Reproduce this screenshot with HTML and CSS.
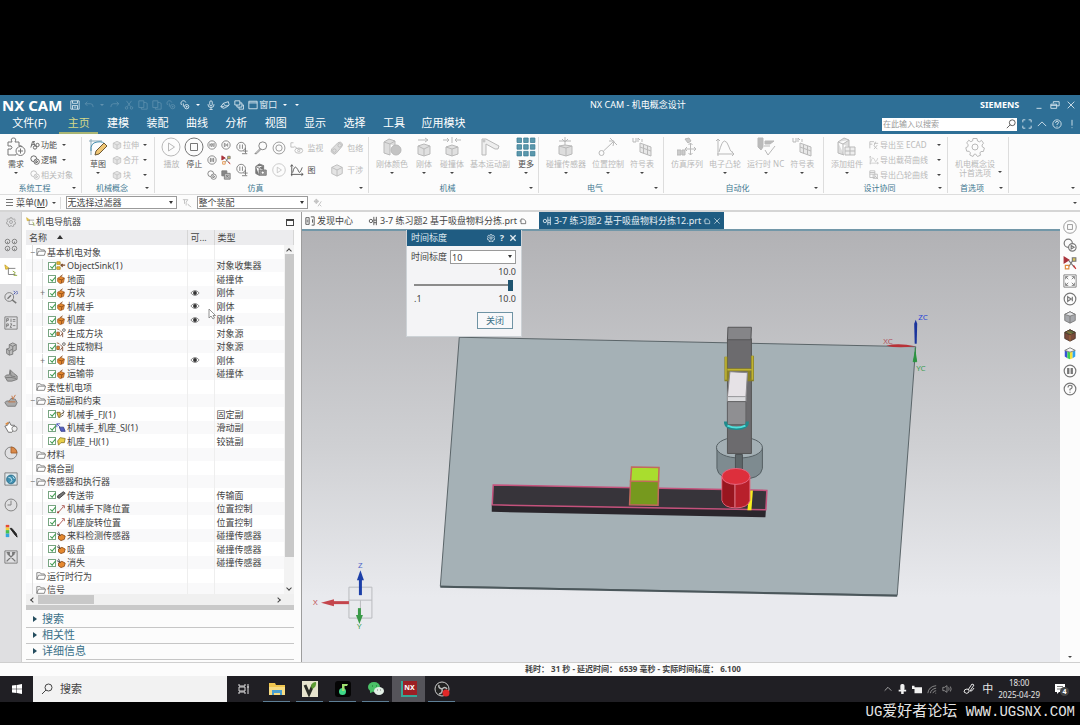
FILE: index.html
```html
<!DOCTYPE html>
<html lang="zh-CN">
<head>
<meta charset="utf-8">
<title>NX CAM - 机电概念设计</title>
<link rel="stylesheet" href="styles.css">
</head>
<body>
<svg class="defs" aria-hidden="true">
  <symbol id="save" viewBox="0 0 12 12"><path d="M1 1h10v10H1zM3 1v3h6V1M3 11V6.500h6V11M4.500 8.500h3"/></symbol>
  <symbol id="undo" viewBox="0 0 12 12"><path d="M4 2 1.500 4.500 4 7M1.500 4.500H8q3 0 3 4"/></symbol>
  <symbol id="redo" viewBox="0 0 12 12"><path d="M8 2l2.500 2.500L8 7M10.500 4.500H4q-3 0-3 4"/></symbol>
  <symbol id="cut" viewBox="0 0 12 12"><path d="M3 1l5 7M9 1L4 8"/><circle cx="3" cy="9.500" r="1.500"/><circle cx="9" cy="9.500" r="1.500"/></symbol>
  <symbol id="func" viewBox="0 0 12 12"><path d="M1 9L3 2l3 0M4 2l2 5M2 6l3-1"/><circle cx="6" cy="9" r="2"/><circle cx="9" cy="6" r="2"/></symbol>
  <symbol id="copy" viewBox="0 0 12 12"><path d="M1 1h6v8H1zM4 9v2h7V4L9 3H7"/></symbol>
  <symbol id="touch" viewBox="0 0 12 12"><path d="M2 6a3 3 0 1 1 5-3M4 4v4"/><circle cx="8" cy="8" r="2.600"/><path d="M8 7v2M7 8h2"/></symbol>
  <symbol id="mic" viewBox="0 0 12 12"><rect x="4.500" y="1" width="3" height="6" rx="1.500"/><path d="M2.500 5v1q0 3 3.500 3t3.500-3V5M6 9v2.500M4 11.500h4"/></symbol>
  <symbol id="loopback" viewBox="0 0 12 12"><path d="M1 8l3-4 6-2 1 4-4 3-3 1zM4 4l2 3h4M1 8h4"/></symbol>
  <symbol id="cascade" viewBox="0 0 12 12"><path d="M1 1h6v5H1zM3.500 6v2.500H9.500V3.500H7M6 8.500V11h5.500V6h-2"/></symbol>
  <symbol id="window" viewBox="0 0 12 12"><path d="M1 1.500h10v9H1zM1 3.500h10"/></symbol>
  <symbol id="restore" viewBox="0 0 12 12"><path d="M4 4V2h7v5H8M1 5h7v5H1zM1 6.500h7"/></symbol>
  <symbol id="close" viewBox="0 0 12 12"><path d="M2 2l8 8M10 2l-8 8"/></symbol>
  <symbol id="min" viewBox="0 0 12 12"><path d="M3 10h6"/></symbol>
  <symbol id="find" viewBox="0 0 12 12"><circle cx="7.500" cy="4.500" r="3.500"/><path d="M5 7l-4 4"/></symbol>
  <symbol id="full" viewBox="0 0 12 12"><path d="M1 4V1h3M8 1h3v3M11 8v3H8M4 11H1V8"/></symbol>
  <symbol id="up" viewBox="0 0 12 12"><path d="M1 8.500l5-5 5 5"/></symbol>
  <symbol id="help" viewBox="0 0 12 12"><circle cx="6" cy="6" r="5"/><path d="M4.300 4.800q0-2 1.800-2t1.700 1.700Q7.800 5.500 6 6.200v1M6 8.300v1"/></symbol>
  <symbol id="bar" viewBox="0 0 12 12"><path d="M6 1v7M6 10v1"/></symbol>

  <symbol id="puzzle" viewBox="0 0 20 20"><path d="M2 5h4q-2-4 1.500-4T9 5h4v4q3-1 3 1M2 5v4q4-1 4 1.500T2 12v6h8M10 18v-1"/><circle cx="14.500" cy="14" r="4.500"/><path d="M14.500 11.500v5M12 14h5"/></symbol>
  <symbol id="sketch" viewBox="0 0 20 20"><path d="M3 2v16M1 4h13" stroke="#8aa9b8"/><path d="M3 14Q2 6 9 5t8 3" stroke="#4a90b0"/><path d="M7 18l1-4 8-8 3 3-8 8z" fill="#f0c674" stroke="#6b5836"/></symbol>
  <symbol id="play" viewBox="0 0 20 20"><circle cx="10" cy="10" r="9"/><path d="M7.500 6l6 4-6 4z"/></symbol>
  <symbol id="stop" viewBox="0 0 20 20"><circle cx="10" cy="10" r="9"/><path d="M6.500 6.500h7v7h-7z"/></symbol>
  <symbol id="ring2" viewBox="0 0 20 20"><circle cx="10" cy="10" r="8.500"/><circle cx="10" cy="10" r="4.500"/></symbol>
  <symbol id="rew" viewBox="0 0 12 12"><circle cx="6" cy="6" r="5"/><path d="M3.500 4v4M6 4L4 6l2 2zM8.500 4l-2 2 2 2z"/></symbol>
  <symbol id="fwd" viewBox="0 0 12 12"><circle cx="6" cy="6" r="5"/><path d="M4 4l3 2-3 2zM8 4v4"/></symbol>
  <symbol id="pause" viewBox="0 0 12 12"><circle cx="6" cy="6" r="5"/><path d="M4 4h1v4H4zM7 4h1v4H7z"/></symbol>
  <symbol id="redx" viewBox="0 0 12 12"><path d="M1 1v5l4-2.500z" fill="#a8323a" stroke="#a8323a"/><path d="M5 4l5 6M9 3L5 9" stroke="#777"/><path d="M8 1.500h3v3H8z" fill="#d8c35a" stroke="#777"/><path d="M2 8h3v3H2z" fill="#fff" stroke="#e08a3c"/><path d="M9 8l2 3" stroke="#c33"/></symbol>
  <symbol id="clock2" viewBox="0 0 12 12"><circle cx="4.500" cy="4.500" r="3.500"/><circle cx="8" cy="8" r="3.200" fill="#fff"/><path d="M7 6.500l2.500 1.500L7 9.500z"/></symbol>
  <symbol id="stack" viewBox="0 0 12 12"><path d="M1 1h6v6H1z" fill="#888"/><path d="M4 4h7v7H4z" fill="#bbb"/><path d="M6 6l3 3M9 6L6 9"/></symbol>
  <symbol id="sheet" viewBox="0 0 12 12"><path d="M1 1h6v8H1zM1 3h6M1 5h4M5 5h5v5H5zM7 7l4 4"/></symbol>
  <symbol id="pausedrop" viewBox="0 0 16 16"><circle cx="7" cy="6.500" r="5"/><path d="M5.500 4v5M8.500 4v5M12 8v6M9.500 11.500h5M8 14.500h6"/></symbol>
  <symbol id="mag" viewBox="0 0 16 16"><circle cx="10" cy="5.500" r="4.500"/><path d="M7 8.500l-6 6 2 0 5-5"/></symbol>
  <symbol id="cubecam" viewBox="0 0 16 16"><path d="M2 4l4-3 5 2v5M2 4v8l4 2M2 4l4 2 5-3M6 6v8" fill="#777"/><path d="M6 8h8v6H6z" fill="#999"/><circle cx="10" cy="11" r="1.800" fill="#fff"/></symbol>
  <symbol id="watch" viewBox="0 0 16 16"><path d="M1 2v5h4M1 2l3 0M5 6l4 3 5 0"/><ellipse cx="10" cy="11" rx="4.500" ry="3"/><circle cx="10" cy="11" r="1.300"/></symbol>
  <symbol id="graph" viewBox="0 0 16 16"><path d="M2 15V2M.5 4L2 2l1.500 2M1 13h14M13 11.500l2 1.500-2 1.500M3 11q2-8 4-6t3 5 4-5"/></symbol>
  <symbol id="cam" viewBox="0 0 20 20"><path d="M3 19V2M1 4l2-2 2 2M2 17h17M17 15l2 2-2 2M4 15q3-11 5.500-11T14 10t4 5"/></symbol>
  <symbol id="capsule" viewBox="0 0 16 16"><path d="M3 14q-3-2-1-5l7-7q3-2 5 1 1 2-1 4l-6 7q-2 2-4 0z" fill="#ddd"/><circle cx="5" cy="11" r="2"/><circle cx="11" cy="5" r="2"/></symbol>
  <symbol id="cube" viewBox="0 0 16 16"><path d="M2 5l6-3 6 3v7l-6 3-6-3z" fill="#e4e4e4"/><path d="M2 5l6 3 6-3M8 8v7"/></symbol>
  <symbol id="cubes" viewBox="0 0 20 20"><path d="M2 5l5-3 6 2v5M2 5v11l6 2V7zM8 7l5-3" fill="#ddd"/><circle cx="14" cy="13" r="5" fill="#c4c4c4"/></symbol>
  <symbol id="cubearrow" viewBox="0 0 20 20"><path d="M4 3h9M11 1l3 2-3 2"/><path d="M4 9l6-2 6 2v8l-6 2-6-2z" fill="#e0e0e0"/><path d="M4 9l6 3 6-3M10 12v7"/></symbol>
  <symbol id="cubehit" viewBox="0 0 20 20"><path d="M1 3h6M5 1l2 2-2 2M19 3h-6M15 1l-2 2 2 2M10 0v6"/><path d="M4 10l6-2 6 2v7l-6 2-6-2z" fill="#e0e0e0"/><path d="M4 10l6 2 6-2M10 12v7"/></symbol>
  <symbol id="joint" viewBox="0 0 20 20"><path d="M2 2h4l13 7-1 3h-3L6 7v11H2z" fill="#eee"/><circle cx="4" cy="4" r="1"/></symbol>
  <symbol id="grid9" viewBox="0 0 20 20"><g fill="#5b98ac" stroke="#3d7f98" stroke-width=".8"><path d="M1 1h4.500v4.500H1zM7.700 1h4.500v4.500H7.700zM14.400 1h4.500v4.500h-4.500zM1 7.700h4.500v4.500H1zM7.700 7.700h4.500v4.500H7.700zM14.400 7.700h4.500v4.500h-4.500zM1 14.400h4.500v4.500H1zM7.700 14.400h4.500v4.500H7.700zM14.400 14.400h4.500v4.500h-4.500z"/></g></symbol>
  <symbol id="sensor" viewBox="0 0 20 20"><path d="M9 0v8M3 4h12M6 2l3 3 3-3"/><path d="M3 9l6-1 7 1v8l-6 2-7-2z" fill="#ddd"/><path d="M3 9l7 2 6-2M10 11v8"/></symbol>
  <symbol id="pos" viewBox="0 0 20 20"><circle cx="3.500" cy="16" r="2.500"/><path d="M5.500 14L15 5M11 4l5 0-1 5M12 1l7 7"/></symbol>
  <symbol id="symtab" viewBox="0 0 20 20"><path d="M1 1v4h3V1M6 5V1l2 2M10 2v3"/><path d="M8 6l11 4v9L8 15zM11.500 7.500v9M15.500 9v9M8 10l11 4" fill="#e8e8e8"/></symbol>
  <symbol id="seq" viewBox="0 0 20 20"><path d="M0 13h4v5H0zM5 13h3v5H5zM8 2l4-1 2 3-3 2z" fill="#ccc"/><path d="M13.500 6v12M8 12h11M11.500 8l2-2 2 2M11.500 16l2 2 2-2M10 10l-2 2 2 2M17 10l2 2-2 2"/></symbol>
  <symbol id="nc" viewBox="0 0 20 20"><path d="M2 1h5v9l-2 3-3-3zM9 4h9l-4 3H9z" fill="#bbb"/><path d="M9 13l3 5 7-9M8 9h6"/></symbol>
  <symbol id="addcomp" viewBox="0 0 20 20"><path d="M1 5l6-4 5 2v7M1 5v11l6 2M1 5l5 2 6-4M6 7v11" fill="#ddd"/><path d="M8 10h10v8H8zM13 10v8M8 14h10" fill="#eee"/></symbol>
  <symbol id="gear" viewBox="0 0 20 20"><path d="M8 1.500h4l.5 2.500 2 .8 2-1.400 2 2.800-1.500 1.900.4 1.900 2 1-1 3.500-2.500 0-1 1.500.6 2.200-3 1.300L10.500 17h-1L8 19.500l-3.200-1.500.6-2.200-1.200-1.500-2.500-.1-.9-3.500 2-1 .4-1.900L1.700 5.900l2.100-2.700 2 1.500 1.800-.8z"/><circle cx="10" cy="10" r="3"/></symbol>
  <symbol id="export" viewBox="0 0 12 12"><path d="M1 2h5M1 5h3M1 2v8M6 4h5M8 2l-2 5 4 4M6 11l4-5"/></symbol>
  <symbol id="filter" viewBox="0 0 12 12"><path d="M1 2h6L5 5v4M3 2v5M7 7l2 3M9 9l2 2"/></symbol>
  <symbol id="snap" viewBox="0 0 12 12"><circle cx="4" cy="4" r="2"/><path d="M4 1v6M1 4h6M10 4L6 10M8 8l2 2"/></symbol>

  <symbol id="nav" viewBox="0 0 16 16"><path d="M1 1l5 4-4 1z" fill="#f3d34a" stroke="#c9a32e"/><path d="M5 5h8M5 5v7h8" stroke="#777"/><path d="M10 8l3 2-2 1M11 13h4" stroke="#8aa62e"/></symbol>
  <symbol id="four" viewBox="0 0 16 16"><circle cx="4" cy="4" r="2.600"/><circle cx="12" cy="4" r="2.600"/><circle cx="4" cy="12" r="2.600"/><circle cx="12" cy="12" r="2.600"/><path d="M4 4v2M12 4v2M4 12v2M12 12v2"/></symbol>
  <symbol id="compass" viewBox="0 0 16 16"><circle cx="6" cy="8" r="5"/><path d="M9 11l5 4M4 10l4-4" stroke-width="1.600"/><path d="M11 1l2 2-2 2M14 1l2 2-2 2" stroke="#3546a8"/></symbol>
  <symbol id="p1p2" viewBox="0 0 16 16"><path d="M1 1h14v14H1z"/><path d="M3 7V3h2v2H3M8 3v4M10 4h3M10 6h3M3 13V9h2v2H3M7 9h2l-2 4h2M10 11h3"/></symbol>
  <symbol id="part" viewBox="0 0 16 16"><path d="M3 8l3-1V3l4-2 4 2v6l-4 2v3l-4 1-3-2z" fill="#bbb"/><path d="M3 8l3 2 4-2V5l4-2M6 10v5M10 8v3M6 3l4 2"/></symbol>
  <symbol id="part2" viewBox="0 0 16 16"><path d="M1 10q1-3 5-2L7 2l4 4 4 3v4l-6 2H4z" fill="#aaa"/><path d="M2 11q6-1 12 1M7 3l1 6 5 1"/></symbol>
  <symbol id="part3" viewBox="0 0 16 16"><path d="M1 10q1-3 5-2l2-3 5 1 2 4-2 4H4z" fill="#aaa"/><path d="M5 9h8M9 2l1 4 3-5" stroke="#c46f3a"/></symbol>
  <symbol id="orangehand" viewBox="0 0 16 16"><path d="M1 7l3-1 2-4 2 4 4 0v5l-3 3H5z" fill="#fff" stroke="#666"/><circle cx="12" cy="10" r="3" fill="#eee"/><path d="M2 5l3-2" stroke="#e08a3c" stroke-width="2"/></symbol>
  <symbol id="pie" viewBox="0 0 16 16"><circle cx="8" cy="8" r="6.800"/><path d="M8 8V1.200A6.800 6.800 0 0 1 14.800 8z" fill="#d98a4a" stroke="#a55f2a"/></symbol>
  <symbol id="globe" viewBox="0 0 16 16"><path d="M1 1h14v14H1z" fill="#dfe8ec"/><circle cx="8" cy="8.500" r="5" fill="#3f8fb0" stroke="#2b6a86"/><path d="M5 6l3 1 1 3-2 2M10 5l2 3" stroke="#d7eef5"/></symbol>
  <symbol id="clock" viewBox="0 0 16 16"><circle cx="8" cy="8" r="6.800"/><path d="M8 3v5H4"/></symbol>
  <symbol id="palette" viewBox="0 0 16 16"><path d="M2 1h4v3H2z" fill="#e64b35" stroke="none"/><path d="M2 4h4v3H2z" fill="#f3d13b" stroke="none"/><path d="M2 7h4v4H2z" fill="#49c04d" stroke="none"/><path d="M2 11h4v4H2z" fill="#33a5e0" stroke="none"/><path d="M7 5l6 8 2 2-1-4-5-6z" fill="#222" stroke="#222"/></symbol>
  <symbol id="tools" viewBox="0 0 16 16"><path d="M1 1h14v14H1z"/><path d="M4 4l9 9M12 4l-9 9M3 3l3 0 0 3M13 3l-3 0 0 3" stroke-width="1.500"/></symbol>
  <symbol id="fit" viewBox="0 0 16 16"><path d="M1 1h14v14H1z"/><path d="M3 6V3h3M10 3h3v3M13 10v3h-3M6 13H3v-3M3 3l3 3M13 3l-3 3M13 13l-3-3M3 13l3-3"/></symbol>
  <symbol id="shade" viewBox="0 0 16 16"><path d="M2 5l6-3 6 3v7l-6 3-6-3z" fill="#a6a8ac"/><path d="M2 5l6-3 6 3-6 2z" fill="#e4e5e7"/><path d="M8 7v8"/></symbol>
  <symbol id="shadebrown" viewBox="0 0 16 16"><path d="M2 5l6-3 6 3v7l-6 3-6-3z" fill="#7a4a3a" stroke="#4a352c"/><path d="M2 5l6-3 6 3-6 3z" fill="#5f6b3c" stroke="#4a352c"/><path d="M8 8v7M5 4l5 3" stroke="#a9713f"/></symbol>
  <symbol id="rainbow" viewBox="0 0 16 16"><path d="M2 5l3 1v8l-3-2z" fill="#3753d6" stroke="none"/><path d="M5 6l3 1v8l-3-1z" fill="#3ecf52" stroke="none"/><path d="M8 7l3-1v8l-3 1z" fill="#f5e13a" stroke="none"/><path d="M11 6l3-1v7l-3 2z" fill="#2fa4ee" stroke="none"/><path d="M2 5l6-3 6 3-6 2z" fill="#f4f4f4"/></symbol>

  <symbol id="folder" viewBox="0 0 12 12"><path d="M1 10V2h4l1 1.500h4V5M1 10l2-5h8.500L10 10z" fill="#fff" stroke="#777"/></symbol>
  <symbol id="body" viewBox="0 0 12 12"><path d="M2 5l4-2 4 2-1 5-4 1.500L2 9z" fill="#e5882e" stroke="#a8622a"/><path d="M3 6l4 1 3-2M7 7l-.500 4M5 3l3-2" stroke="#8a4b18"/></symbol>
  <symbol id="sink" viewBox="0 0 12 12"><path d="M1 1h4v3H1zM1 7h4v3H1z" fill="#f2c230" stroke="#a88a2a"/><path d="M6 5h5M8 3.500L6 5l2 2" stroke="#7b4a2a" stroke-width="1.500"/></symbol>
  <symbol id="source" viewBox="0 0 12 12"><path d="M1 1l3 1M1 5h3v4H1z" fill="#e5882e" stroke="#935c2a"/><circle cx="9.500" cy="2.500" r="1.600" stroke="#555"/><path d="M5 3l3 3-3 4M8 6v5" stroke="#7c4a34"/></symbol>
  <symbol id="fj" viewBox="0 0 12 12"><path d="M1 4h4v6H3zM5 7l4-3" fill="#efc64b" stroke="#77602a"/><path d="M8 1q3 2 0 5M6 9l3-2" stroke="#444"/></symbol>
  <symbol id="sj" viewBox="0 0 12 12"><path d="M1 1l4 4M1 5V1h4" stroke="#3b49b5"/><path d="M4 5h5l2 5H6z" fill="#5560c4" stroke="#333c86"/></symbol>
  <symbol id="hj" viewBox="0 0 12 12"><path d="M2 6l3-4 6 1-1 5-4 0-3 3z" fill="#e8cf4c" stroke="#8f7a24"/></symbol>
  <symbol id="belt" viewBox="0 0 12 12"><path d="M2 7l7-5 2 2-7 6q-3 0-2-3z" fill="#777" stroke="#333"/></symbol>
  <symbol id="ctl" viewBox="0 0 12 12"><path d="M3 10l6-7M7 2l3 0v3" stroke="#a2453d"/><circle cx="2.500" cy="10" r="1.300" fill="#a2453d" stroke="none"/></symbol>
  <symbol id="csen" viewBox="0 0 12 12"><path d="M3 6l4-2 4 2-1 4-4 1.500-3-2z" fill="#e5882e" stroke="#8a4b18"/><path d="M3 1l2 5M1 3l3 2" stroke="#333"/></symbol>
  <symbol id="eye" viewBox="0 0 12 12"><path d="M1 6q5-6 10 0-5 6-10 0z" stroke="#777"/><circle cx="6" cy="6" r="2.300" fill="#333" stroke="none"/></symbol>
  <symbol id="pin" viewBox="0 0 12 12"><path d="M3 10V3h4l3 3v4zM1 6h2"/></symbol>
  <symbol id="doc" viewBox="0 0 12 12"><path d="M7 1v10M10 1v10"/><circle cx="3.500" cy="6" r="2"/><path d="M7 5h3M7 8h3"/></symbol>
  <symbol id="discover" viewBox="0 0 12 12"><path d="M1 2h4v8H1zM2 5h2M2 7h2M7 1h4v10H8M9 4v4"/></symbol>
</svg>

<div class="app">
  <header class="titlebar">
    <div class="quick">
      <h1 class="brand">NX CAM</h1>
      <button class="qb" aria-label="保存"><svg class="i10"><use href="#save"/></svg></button>
      <button class="qb off" aria-label="撤销"><svg class="i10"><use href="#undo"/></svg></button>
      <span class="dot off"></span>
      <button class="qb off" aria-label="重做"><svg class="i10"><use href="#redo"/></svg></button>
      <button class="qb off" aria-label="剪切"><svg class="i10"><use href="#cut"/></svg></button>
      <button class="qb off" aria-label="复制"><svg class="i10"><use href="#copy"/></svg></button>
      <button class="qb off" aria-label="粘贴"><svg class="i10"><use href="#copy"/></svg></button>
      <button class="qb off" aria-label="重复命令"><svg class="i10"><use href="#touch"/></svg></button>
      <button class="qb" aria-label="触控"><svg class="i10"><use href="#touch"/></svg></button>
      <span class="dot"></span>
      <button class="qb" aria-label="语音"><svg class="i10"><use href="#mic"/></svg></button>
      <button class="qb" aria-label="助手"><svg class="i10"><use href="#loopback"/></svg></button>
      <button class="qb" aria-label="层叠"><svg class="i10"><use href="#cascade"/></svg></button>
      <button class="qb win"><svg class="i10"><use href="#window"/></svg>窗口</button>
      <span class="dot"></span>
      <span class="dot"></span>
    </div>
    <div class="apptitle">NX CAM - 机电概念设计</div>
    <div class="winctl">
      <strong class="vendor">SIEMENS</strong>
      <button class="qb" aria-label="最小化"><svg class="i10"><use href="#min"/></svg></button>
      <button class="qb" aria-label="还原"><svg class="i10"><use href="#restore"/></svg></button>
      <button class="qb" aria-label="关闭窗口"><svg class="i10"><use href="#close"/></svg></button>
    </div>
  </header>

  <nav class="tabs">
    <a href="#file">文件(F)</a>
    <a href="#home" class="on">主页</a>
    <a href="#model">建模</a>
    <a href="#asm">装配</a>
    <a href="#curve">曲线</a>
    <a href="#analysis">分析</a>
    <a href="#view">视图</a>
    <a href="#display">显示</a>
    <a href="#select">选择</a>
    <a href="#tool">工具</a>
    <a href="#apps">应用模块</a>
    <div class="tabtools">
      <label class="search"><input type="text" placeholder="在此输入以搜索" aria-label="搜索命令"><svg class="i10"><use href="#find"/></svg></label>
      <button class="qb" aria-label="全屏"><svg class="i10"><use href="#full"/></svg></button>
      <button class="qb" aria-label="折叠功能区"><svg class="i10"><use href="#up"/></svg></button>
      <button class="qb" aria-label="帮助"><svg class="i10"><use href="#help"/></svg></button>
      <button class="qb" aria-label="提示"><svg class="i10"><use href="#bar"/></svg></button>
    </div>
  </nav>

  <section class="ribbon">
    <div class="group">
      <div class="cmds split">
        <button class="big"><svg class="i20"><use href="#puzzle"/></svg><span>需求</span><i class="dn"></i></button>
        <div class="list">
          <button class="sm"><svg class="i10"><use href="#func"/></svg>功能<i class="dn"></i></button>
          <button class="sm"><svg class="i10"><use href="#clock2"/></svg>逻辑<i class="dn"></i></button>
          <button class="sm" disabled><svg class="i10"><use href="#clock2"/></svg>相关对象</button>
        </div>
      </div>
      <div class="cap">系统工程<i class="dn"></i></div>
    </div>
    <div class="group">
      <div class="cmds split">
        <button class="big"><svg class="i20"><use href="#sketch"/></svg><span>草图</span><i class="dn"></i></button>
        <div class="list">
          <button class="sm wide" disabled><svg class="i10"><use href="#cube"/></svg>拉伸<i class="dn"></i></button>
          <button class="sm wide" disabled><svg class="i10"><use href="#cube"/></svg>合开<i class="dn"></i></button>
          <button class="sm wide" disabled><svg class="i10"><use href="#cube"/></svg>块<i class="dn"></i></button>
        </div>
      </div>
      <div class="cap">机械概念<i class="dn"></i></div>
    </div>
    <div class="group">
      <div class="cmds sim">
        <button class="big" disabled><svg class="i20"><use href="#play"/></svg><span>播放</span></button>
        <button class="big"><svg class="i20"><use href="#stop"/></svg><span>停止</span></button>
        <div class="minis">
          <button class="ic" aria-label="重新开始"><svg class="i10"><use href="#rew"/></svg></button>
          <button class="ic" aria-label="步进"><svg class="i10"><use href="#fwd"/></svg></button>
          <button class="ic" aria-label="暂停"><svg class="i10"><use href="#pause"/></svg></button>
          <button class="ic" aria-label="碰撞"><svg class="i10"><use href="#redx"/></svg></button>
          <button class="ic" aria-label="时间标度"><svg class="i10"><use href="#clock2"/></svg></button>
          <button class="ic" aria-label="快照"><svg class="i10"><use href="#stack"/></svg></button>
        </div>
        <div class="mids">
          <button class="ic" aria-label="断点"><svg class="i14"><use href="#pausedrop"/></svg></button>
          <button class="ic" aria-label="探测"><svg class="i14"><use href="#mag"/></svg></button>
          <button class="ic" aria-label="录制"><svg class="i14"><use href="#ring2"/></svg></button>
          <button class="ic" aria-label="断点设置"><svg class="i14"><use href="#pausedrop"/></svg></button>
          <button class="ic" aria-label="截图"><svg class="i14"><use href="#cubecam"/></svg></button>
          <button class="ic" disabled aria-label="回放"><svg class="i14"><use href="#play"/></svg></button>
        </div>
        <div class="pair">
          <button class="sm" disabled><svg class="i14"><use href="#watch"/></svg>监视</button>
          <button class="sm"><svg class="i14"><use href="#graph"/></svg>图</button>
        </div>
        <div class="pair">
          <button class="sm" disabled><svg class="i14"><use href="#capsule"/></svg>包络</button>
          <button class="sm" disabled><svg class="i14"><use href="#cube"/></svg>干涉</button>
        </div>
      </div>
      <div class="cap">仿真<i class="dn"></i></div>
    </div>
    <div class="group">
      <div class="cmds row">
        <button class="big" disabled><svg class="i20"><use href="#cubes"/></svg><span>刚体颜色</span><i class="dn"></i></button>
        <button class="big" disabled><svg class="i20"><use href="#cubearrow"/></svg><span>刚体</span><i class="dn"></i></button>
        <button class="big" disabled><svg class="i20"><use href="#cubehit"/></svg><span>碰撞体</span><i class="dn"></i></button>
        <button class="big" disabled><svg class="i20"><use href="#joint"/></svg><span>基本运动副</span><i class="dn"></i></button>
        <button class="big"><svg class="i20"><use href="#grid9"/></svg><span>更多</span><i class="dn"></i></button>
      </div>
      <div class="cap">机械<i class="dn"></i></div>
    </div>
    <div class="group">
      <div class="cmds row">
        <button class="big" disabled><svg class="i20"><use href="#sensor"/></svg><span>碰撞传感器</span><i class="dn"></i></button>
        <button class="big" disabled><svg class="i20"><use href="#pos"/></svg><span>位置控制</span><i class="dn"></i></button>
        <button class="big" disabled><svg class="i20"><use href="#symtab"/></svg><span>符号表</span><i class="dn"></i></button>
      </div>
      <div class="cap">电气<i class="dn"></i></div>
    </div>
    <div class="group">
      <div class="cmds row">
        <button class="big" disabled><svg class="i20"><use href="#seq"/></svg><span>仿真序列</span></button>
        <button class="big" disabled><svg class="i20"><use href="#cam"/></svg><span>电子凸轮</span><i class="dn"></i></button>
        <button class="big" disabled><svg class="i20"><use href="#nc"/></svg><span>运行时 NC</span><i class="dn"></i></button>
        <button class="big" disabled><svg class="i20"><use href="#symtab"/></svg><span>符号表</span><i class="dn"></i></button>
      </div>
      <div class="cap">自动化<i class="dn"></i></div>
    </div>
    <div class="group">
      <div class="cmds row">
        <button class="big" disabled><svg class="i20"><use href="#addcomp"/></svg><span>添加组件</span><i class="dn"></i></button>
        <div class="list">
          <button class="sm ex" disabled><svg class="i10"><use href="#export"/></svg>导出至 ECAD<i class="dn"></i></button>
          <button class="sm ex" disabled><svg class="i10"><use href="#graph"/></svg>导出载荷曲线<i class="dn"></i></button>
          <button class="sm ex" disabled><svg class="i10"><use href="#sheet"/></svg>导出凸轮曲线<i class="dn"></i></button>
        </div>
      </div>
      <div class="cap">设计协同<i class="dn"></i></div>
    </div>
    <div class="group">
      <div class="cmds row pref">
        <button class="big" disabled><svg class="i20"><use href="#gear"/></svg><span>机电概念设<br>计首选项</span></button>
        <i class="dn"></i>
      </div>
      <div class="cap">首选项<i class="dn"></i></div>
    </div>
    <div class="group">
      <div class="cmds"></div>
      <div class="cap"><i class="dn"></i></div>
    </div>
  </section>

  <section class="selbar">
    <button class="menu"><span class="burger"></span>菜单(<u>M</u>)<i class="dn"></i></button>
    <label class="pick"><select aria-label="选择过滤器"><option>无选择过滤器</option></select></label>
    <svg class="i10 faint"><use href="#filter"/></svg>
    <label class="pick"><select aria-label="选择范围"><option>整个装配</option></select></label>
    <svg class="i10 faint"><use href="#snap"/></svg>
    <i class="dn last"></i>
  </section>

  <main class="work">
    <aside class="rail">
      <button class="first" aria-label="设置"><svg class="i10"><use href="#gear"/></svg></button>
      <button aria-label="装配导航器"><svg class="i14"><use href="#four"/></svg></button>
      <button class="on" aria-label="机电导航器"><svg class="i14"><use href="#nav"/></svg></button>
      <button aria-label="运行时察看器"><svg class="i14"><use href="#compass"/></svg></button>
      <button aria-label="表达式"><svg class="i14"><use href="#p1p2"/></svg></button>
      <button aria-label="部件导航器"><svg class="i14"><use href="#part"/></svg></button>
      <button aria-label="重用库"><svg class="i14"><use href="#part2"/></svg></button>
      <button aria-label="加工向导"><svg class="i14"><use href="#part3"/></svg></button>
      <button aria-label="视图管理"><svg class="i14"><use href="#orangehand"/></svg></button>
      <button aria-label="分析"><svg class="i14"><use href="#pie"/></svg></button>
      <button aria-label="浏览器"><svg class="i14"><use href="#globe"/></svg></button>
      <button aria-label="历史记录"><svg class="i14"><use href="#clock"/></svg></button>
      <button aria-label="颜色"><svg class="i14"><use href="#palette"/></svg></button>
      <button aria-label="工具"><svg class="i14"><use href="#tools"/></svg></button>
    </aside>

    <section class="panel">
      <h2 class="ptitle"><svg class="i10"><use href="#nav"/></svg>机电导航器<span class="box"></span></h2>
      <div class="treebox">
        <div class="treeview">
          <table class="tree">
            <thead><tr><th class="c1">名称 <i class="upt"></i></th><th class="c2">可...</th><th class="c3">类型</th></tr></thead>
            <tbody>
              <tr><td><div class="cat"><b>−</b><svg class="i10"><use href="#folder"/></svg>基本机电对象</div></td><td></td><td></td></tr>
              <tr><td><label class="leaf"><b></b><input type="checkbox" checked><svg class="i10"><use href="#sink"/></svg>ObjectSink(1)</label></td><td></td><td>对象收集器</td></tr>
              <tr><td><label class="leaf"><b></b><input type="checkbox" checked><svg class="i10"><use href="#body"/></svg>地面</label></td><td></td><td>碰撞体</td></tr>
              <tr><td><label class="leaf"><b>+</b><input type="checkbox" checked><svg class="i10"><use href="#body"/></svg>方块</label></td><td><svg class="i10"><use href="#eye"/></svg></td><td>刚体</td></tr>
              <tr><td><label class="leaf"><b></b><input type="checkbox" checked><svg class="i10"><use href="#body"/></svg>机械手</label></td><td><svg class="i10"><use href="#eye"/></svg></td><td>刚体</td></tr>
              <tr><td><label class="leaf"><b></b><input type="checkbox" checked><svg class="i10"><use href="#body"/></svg>机座</label></td><td><svg class="i10"><use href="#eye"/></svg></td><td>刚体</td></tr>
              <tr><td><label class="leaf"><b></b><input type="checkbox" checked><svg class="i10"><use href="#source"/></svg>生成方块</label></td><td></td><td>对象源</td></tr>
              <tr><td><label class="leaf"><b></b><input type="checkbox" checked><svg class="i10"><use href="#source"/></svg>生成物料</label></td><td></td><td>对象源</td></tr>
              <tr><td><label class="leaf"><b>+</b><input type="checkbox" checked><svg class="i10"><use href="#body"/></svg>圆柱</label></td><td><svg class="i10"><use href="#eye"/></svg></td><td>刚体</td></tr>
              <tr><td><label class="leaf"><b></b><input type="checkbox" checked><svg class="i10"><use href="#body"/></svg>运输带</label></td><td></td><td>碰撞体</td></tr>
              <tr><td><div class="cat"><b></b><svg class="i10"><use href="#folder"/></svg>柔性机电项</div></td><td></td><td></td></tr>
              <tr><td><div class="cat"><b>−</b><svg class="i10"><use href="#folder"/></svg>运动副和约束</div></td><td></td><td></td></tr>
              <tr><td><label class="leaf"><b></b><input type="checkbox" checked><svg class="i10"><use href="#fj"/></svg>机械手_FJ(1)</label></td><td></td><td>固定副</td></tr>
              <tr><td><label class="leaf"><b></b><input type="checkbox" checked><svg class="i10"><use href="#sj"/></svg>机械手_机座_SJ(1)</label></td><td></td><td>滑动副</td></tr>
              <tr><td><label class="leaf"><b></b><input type="checkbox" checked><svg class="i10"><use href="#hj"/></svg>机座_HJ(1)</label></td><td></td><td>铰链副</td></tr>
              <tr><td><div class="cat"><b></b><svg class="i10"><use href="#folder"/></svg>材料</div></td><td></td><td></td></tr>
              <tr><td><div class="cat"><b></b><svg class="i10"><use href="#folder"/></svg>耦合副</div></td><td></td><td></td></tr>
              <tr><td><div class="cat"><b>−</b><svg class="i10"><use href="#folder"/></svg>传感器和执行器</div></td><td></td><td></td></tr>
              <tr><td><label class="leaf"><b></b><input type="checkbox" checked><svg class="i10"><use href="#belt"/></svg>传送带</label></td><td></td><td>传输面</td></tr>
              <tr><td><label class="leaf"><b></b><input type="checkbox" checked><svg class="i10"><use href="#ctl"/></svg>机械手下降位置</label></td><td></td><td>位置控制</td></tr>
              <tr><td><label class="leaf"><b></b><input type="checkbox" checked><svg class="i10"><use href="#ctl"/></svg>机座旋转位置</label></td><td></td><td>位置控制</td></tr>
              <tr><td><label class="leaf"><b></b><input type="checkbox" checked><svg class="i10"><use href="#csen"/></svg>来料检测传感器</label></td><td></td><td>碰撞传感器</td></tr>
              <tr><td><label class="leaf"><b></b><input type="checkbox" checked><svg class="i10"><use href="#csen"/></svg>吸盘</label></td><td></td><td>碰撞传感器</td></tr>
              <tr><td><label class="leaf"><b></b><input type="checkbox" checked><svg class="i10"><use href="#csen"/></svg>消失</label></td><td></td><td>碰撞传感器</td></tr>
              <tr><td><div class="cat"><b></b><svg class="i10"><use href="#folder"/></svg>运行时行为</div></td><td></td><td></td></tr>
              <tr><td><div class="cat"><b></b><svg class="i10"><use href="#folder"/></svg>信号</div></td><td></td><td></td></tr>
            </tbody>
          </table>
          <div class="vbar"><i class="ch u"></i><span class="thumb"></span><i class="ch d"></i></div>
        </div>
        <div class="hbar"><i class="ch l"></i><span class="thumb"></span><i class="ch r"></i></div>
      </div>
      <button class="fold">搜索</button>
      <button class="fold">相关性</button>
      <button class="fold">详细信息</button>
      <svg class="cursor" viewBox="0 0 8 12"><path d="M1 1v9l2-2 2 3 1.500-1L5 7.500h2.500z" fill="#fff" stroke="#777" stroke-width=".8"/></svg>
    </section>

    <section class="view">
      <div class="docs">
        <a href="#discover" class="doc d1"><svg class="i10"><use href="#discover"/></svg>发现中心</a>
        <a href="#prt" class="doc d2"><svg class="i10"><use href="#doc"/></svg>3-7 练习题2 基于吸盘物料分拣.prt <svg class="i8"><use href="#pin"/></svg></a>
        <a href="#prt12" class="doc on"><svg class="i10"><use href="#doc"/></svg>3-7 练习题2 基于吸盘物料分拣12.prt <svg class="i8"><use href="#pin"/></svg><svg class="i8"><use href="#close"/></svg></a>
      </div>
      <div class="canvas">
        <svg class="scene" viewBox="301 231 759 432" preserveAspectRatio="none" role="img" aria-label="三维分拣模型">
          <path d="M458.500 337.500 915.500 347 897 596 439.500 587z" fill="#a5b1b6" stroke="#5a6468"/>
          <path d="M439.500 587.500 897 596.500" stroke="#4b575b" stroke-width="2"/>
          <path d="M716.500 448v21q1 11 22.500 11t23-11v-21z" fill="#7e8b90" stroke="#555f63"/>
          <ellipse cx="739" cy="448" rx="23" ry="10.500" fill="#a3afb4" stroke="#555f63"/>
          <path d="M727 339h24v115h-24z" fill="#6c6b6e" stroke="#555"/>
          <path d="M727.500 327.500h23.500l-.500 12.500h-23.500z" fill="#858588" stroke="#555557"/>
          <path d="M735 455h7v20h-7z" fill="#5d6669" stroke="#4c5154"/>
          <path d="M725.500 357v23h3v-10h20v10h3.500v-24" fill="none" stroke="#8a8124" stroke-width="3"/>
          <path d="M725.500 357v23M727 370h24M752 356v24" stroke="#c0b433" stroke-width="1.500"/>
          <path d="M729.500 372 747 373 745.500 398 727 397z" fill="#e6e2e6" stroke="#8b898c"/>
          <path d="M727 397h18.500v5H727z" fill="#dcdcdf" stroke="#99999c"/>
          <path d="M727 402h18.500v23H727z" fill="#8f8f92" stroke="#636365"/>
          <path d="M725 422q0 7 11 7t11-7" stroke="#218a8c" stroke-width="3"/>
          <path d="M727 426q9 4 18 0" stroke="#4fe0dc" stroke-width="2"/>
          <path d="M491 505.500 765.500 510.500 765 518 491 512.500z" fill="#2a262c"/>
          <path d="M492.500 485.500 766.500 491 765.500 510.500 491.500 505.500z" fill="#37343a" stroke="#c4527c" stroke-width="1.500"/>
          <path d="M630 481.500h28l-.500 24.500-28.500-.500z" fill="#76991e" stroke="#c26a5c" stroke-width="1.500"/>
          <path d="M631 467.500 658.500 468l-.500 14-28-.500z" fill="#a9dd2e" stroke="#c26a5c" stroke-width="1.500"/>
          <path d="M749 491h3.500l-1.500 20h-4z" fill="#f6ee1e"/>
          <path d="M721.500 477v24q2 7.500 14 7.500t14-7.500v-24z" fill="#b8202b" stroke="#e4647e"/>
          <path d="M722 479q1 6 13 6v23q-12-1-13-7z" fill="#98161f"/>
          <ellipse cx="735.500" cy="477" rx="14" ry="8" fill="#dd2f3c" stroke="#e4647e"/>
          <path d="M734.500 485v23" stroke="#ee8a9c"/>
          <path d="M886 346q12-3 29 .5-17 2.500-29-.500z" fill="#b83238"/>
          <path d="M915.500 320l1.500 4-.500 20h-2l-.500-20z" fill="#1a349c"/>
          <path d="M915 348v14M913 362l2-10 1.500 10z" fill="#2b9440" stroke="#2b9440"/>
          <g class="axis"><text x="883" y="344" fill="#b05560">XC</text><text x="918" y="320" fill="#2946d6">ZC</text><text x="916" y="371" fill="#3c9e52">YC</text></g>
          <path d="M348 588h23v31h-23zM348 601h23M359.500 601v18" fill="none" stroke="#b9bbbf"/>
          <path d="M359.500 596v-16" stroke="#1c3fa8" stroke-width="3"/><path d="M356 581l3.500-10 3.500 10z" fill="#1c3fa8"/>
          <path d="M348 603.500h-16" stroke="#c4454c" stroke-width="3"/><path d="M333 600l-13 3.500 13 3.500z" fill="#c4454c"/>
          <path d="M358.500 609v8" stroke="#3a9a48" stroke-width="3"/><path d="M355 616l3.500 9 3.500-9z" fill="#3a9a48"/>
          <g class="axis"><text x="357" y="569" fill="#5067c8">Z</text><text x="312" y="606" fill="#c05058">X</text><text x="356" y="630" fill="#3c9e52">Y</text></g>
        </svg>
        <form class="dialog">
          <header><span>时间标度</span><svg class="i10"><use href="#gear"/></svg><b>?</b><svg class="i10"><use href="#close"/></svg></header>
          <div class="dbody">
            <div class="drow"><label for="scale">时间标度</label><span class="pick"><select id="scale"><option>10</option></select></span></div>
            <output>10.0</output>
            <input type="range" min="0" max="10" value="10" aria-label="时间标度滑块">
            <div class="ends"><span>.1</span><span>10.0</span></div>
            <button type="button">关闭</button>
          </div>
        </form>
      </div>
    </section>

    <aside class="viewbar">
      <button aria-label="停止"><svg class="i14"><use href="#stop"/></svg></button>
      <button aria-label="仿真时钟"><svg class="i14"><use href="#clock2"/></svg></button>
      <button aria-label="碰撞"><svg class="i14"><use href="#redx"/></svg></button>
      <button aria-label="适合窗口"><svg class="i14"><use href="#fit"/></svg></button>
      <button aria-label="下一步"><svg class="i14"><use href="#fwd"/></svg></button>
      <button aria-label="着色"><svg class="i14"><use href="#shade"/></svg></button>
      <button aria-label="材质"><svg class="i14"><use href="#shadebrown"/></svg></button>
      <button aria-label="面分析"><svg class="i14"><use href="#rainbow"/></svg></button>
      <button aria-label="暂停"><svg class="i14"><use href="#pause"/></svg></button>
      <button aria-label="帮助"><svg class="i14"><use href="#help"/></svg></button>
      <i class="dn"></i>
    </aside>
  </main>

  <div class="status"><strong>耗时： 31 秒 - 延迟时间： 6539 毫秒 - 实际时间标度： 6.100</strong></div>

  <footer class="taskbar">
    <button class="start" aria-label="开始"><svg class="i12" viewBox="0 0 12 12"><path d="M1 2.500 5.500 2v3.700H1zM6 1.900 11 1v4.700H6zM1 6.300h4.500V10L1 9.500zM6 6.300h5V11l-5-.900z" fill="#fff" stroke="none"/></svg></button>
    <label class="tsearch"><svg class="i12"><use href="#find"/></svg><input type="text" placeholder="搜索" aria-label="搜索 Windows"></label>
    <button class="task plain" aria-label="任务视图"><svg class="i12" viewBox="0 0 12 12"><path d="M1 1v2h6V1M1 11V9h6v2M1 4h6v4H1zM10 1v10M9 4h2" stroke="#ddd"/></svg></button>
    <button class="task" aria-label="文件资源管理器"><svg class="i16" viewBox="0 0 16 16"><path d="M0 2h6l1 2h9v10H0z" fill="#f0c64f" stroke="none"/><path d="M0 6h16v8H0z" fill="#f7dc83" stroke="none"/><path d="M3 14V9h10v5h-2v-2H5v2z" fill="#4a9fd0" stroke="none"/></svg></button>
    <button class="task" aria-label="录屏"><svg class="i16" viewBox="0 0 16 16"><path d="M0 0h16v16H0z" fill="#e6e3cd" stroke="none"/><path d="M3 4l4 9 4-9" stroke="#2a2c26" stroke-width="3"/><path d="M9 5q1-4 5-4 1 5-4 7z" fill="#5c9b32" stroke="none"/></svg></button>
    <button class="task" aria-label="音乐"><svg class="i16" viewBox="0 0 16 16"><rect width="16" height="16" rx="3" fill="#050505" stroke="none"/><circle cx="7.500" cy="10.500" r="3.500" fill="#3fd98a" stroke="none"/><path d="M7 3h6l-1 2H9.500v5H7z" fill="#9fe070" stroke="none"/></svg></button>
    <button class="task" aria-label="微信"><svg class="i16" viewBox="0 0 16 16"><ellipse cx="6" cy="6" rx="6" ry="5" fill="#4bc268" stroke="none"/><path d="M2 9l0 3 3-1" fill="#4bc268" stroke="none"/><ellipse cx="11" cy="10" rx="5" ry="4" fill="#e3efe6" stroke="none"/><path d="M4 5h1M8 5h1" stroke="#1e6b35"/><path d="M9 9h1M12 9h1" stroke="#777"/></svg></button>
    <button class="task on" aria-label="NX"><span class="nx">NX</span></button>
    <button class="task" aria-label="OBS"><svg class="i16" viewBox="0 0 16 16"><circle cx="8" cy="8" r="7" fill="#222" stroke="#ccc"/><path d="M8 8q-4-1-3-4M8 8q3-3 5 0M8 8q1 4-3 5" stroke="#bbb" stroke-width="1.500"/><circle cx="12" cy="12" r="3.500" fill="#e02828" stroke="none"/></svg></button>
    <div class="tray">
      <svg class="i8"><use href="#up"/></svg>
      <svg class="i10 solid" viewBox="0 0 12 12"><rect x="4" y="0" width="5" height="8" rx="2"/><path d="M2 7h9v2H8v3H5V9H2z"/></svg>
      <svg class="i10 solid" viewBox="0 0 12 12"><path d="M0 2h3v2h9v7H3V6H0z"/></svg>
      <svg class="i10 dimmed" viewBox="0 0 12 12"><path d="M1 11Q2 3 11 2M4 11q1-5 7-6M7 11q1-3 4-3M10 11h1"/></svg>
      <svg class="i10 dimmed" viewBox="0 0 12 12"><path d="M1 4h2l3-2v8L3 8H1zM8 4q1 2 0 4M10 3q2 3 0 6"/></svg>
      <svg class="i12 pen" viewBox="0 0 12 12"><path d="M1 9q0-3 3-3t2 3q-2 3-5 0zM5 7l4-6 2 1-4 6q2 1 4-3"/></svg>
      <span class="ime">中</span>
      <time>18:00<br>2025-04-29</time>
      <span class="note"><svg class="i12" viewBox="0 0 12 12"><path d="M1 1h10v8H5l-2 2V9H1z" fill="#fff" stroke="none"/><path d="M3 3.500h6M3 6h6" stroke="#777"/></svg><em>4</em></span>
    </div>
  </footer>
  <div class="mark">UG<span>爱好者论坛</span> WWW.UGSNX.COM</div>
</div>
</body>
</html>
```

FILE: styles.css
```css
* { box-sizing: border-box; }
body {
  margin: 0;
  background: #000;
  color: #444;
  font: 9px/12px "Noto Sans", "Noto Sans CJK SC", sans-serif;
}
button, input, select { font: inherit; color: inherit; margin: 0; padding: 0; border: 0; background: none; border-radius: 0; }
a { color: inherit; text-decoration: none; }
svg { fill: none; stroke: currentColor; stroke-width: 1; flex: none; display: block; }
.defs { position: absolute; width: 0; height: 0; }
.i8 { width: 8px; height: 8px; }
.i10 { width: 10px; height: 10px; }
.i12 { width: 12px; height: 12px; }
.i14 { width: 14px; height: 14px; }
.i16 { width: 16px; height: 16px; }
.i20 { width: 20px; height: 20px; }

.app { display: flex; flex-direction: column; height: 100vh; padding-top: 95px; }

/* small drop-down triangle */
.dn { flex: none; width: 0; height: 0; border: 2px solid transparent; border-top: 2px solid #444; border-bottom: 0; }

/* title bar */
.titlebar { display: grid; grid-template-columns: 590fr 390fr 100fr; align-items: center; height: 19px; background: #2e6f96; color: #fff; }
.quick { display: flex; align-items: center; gap: 4px; }
.brand { margin: 0 4px 0 2px; font: bold 15px/18px "Noto Sans", sans-serif; }
.qb { display: flex; align-items: center; gap: 1px; color: #e3eef4; }
.off { opacity: .25; }
.dot { border: 2px solid transparent; border-top-color: #fff; border-bottom: 0; margin: 0 2px; }
.winctl { display: flex; align-items: center; justify-content: space-between; padding-right: 4px; }
.vendor { font-size: 9px; margin-right: 8px; }

/* ribbon tabs */
.tabs { display: grid; grid-template-columns: 590fr repeat(9, 394fr) 600fr 6064fr; height: 20px; background: #2e6f96; color: #fff; font-size: 11px; line-height: 18px; text-align: center; }
.tabs .on { color: #d5d98a; border-bottom: 2px solid #a9b573; }
.tabtools { display: flex; justify-content: flex-end; align-items: center; gap: 5px; padding-right: 3px; }
.search { display: flex; align-items: center; flex: 0 1 135px; height: 13px; padding: 0 1px; background: #fff; color: #444; font-size: 8px; }
.search input { flex: 1; min-width: 0; height: 13px; }
::placeholder { color: #999; opacity: 1; }

/* ribbon */
.ribbon { display: grid; grid-template-columns: 82fr 73fr 214fr 170fr 125fr 160fr 124fr 61fr 71fr; height: 61px; background: #fcfcfc; border-bottom: 1px solid #ddd; padding-top: 3px; font-size: 8px; line-height: 10px; }
.group { display: flex; flex-direction: column; border-right: 1px solid #ddd; margin-bottom: 2px; min-width: 0; }
.group:last-child { border: 0; }
.cmds { flex: 1; }
.cap { display: flex; align-items: center; justify-content: center; position: relative; height: 11px; padding-right: 12px; color: #3f7890; }
.cap .dn { position: absolute; right: 5px; }
.big { display: flex; flex-direction: column; align-items: center; white-space: nowrap; line-height: 9px; color: #505050; }
.big svg { color: #777; }
.big span { margin: 2px 0 4px; }
.big[disabled], .sm[disabled], .ic[disabled], .big[disabled] svg { color: #b9b9b9; }
.split { display: grid; grid-template-columns: 30px 1fr; }
.split .big { padding-left: 2px; }
.list { display: flex; flex-direction: column; }
.sm { display: flex; align-items: center; gap: 1px; height: 15px; white-space: nowrap; color: #505050; }
.sm .dn { margin-left: 4px; }
.wide .dn, .ex .dn { margin-left: auto; }
.wide { padding-right: 7px; }
.ex { width: 72px; }
.sim { display: grid; grid-template-columns: 23fr 23fr 27fr 56fr 40fr 40fr; padding-left: 5px; }
.minis { display: grid; grid-template-columns: 1fr 1fr; grid-auto-rows: 15px; }
.mids { display: grid; grid-template-columns: repeat(3, 1fr); grid-auto-rows: 22px; }
.pair { display: grid; grid-auto-rows: 22px; padding-left: 2px; }
.pair .sm { height: 22px; gap: 3px; }
.ic { display: flex; align-items: center; justify-content: center; color: #777; }
.row { display: flex; align-items: flex-start; gap: 6px; padding-left: 7px; }
.pref { gap: 3px; }
.pref > .dn { margin-top: 34px; }

/* selection bar */
.selbar { display: flex; align-items: center; gap: 5px; height: 17px; padding: 0 3px 0 6px; background: #fcfcfc; border-bottom: 2px solid #d5d5d5; }
.menu { display: flex; align-items: center; padding-right: 4px; border-right: 1px solid #ddd; }
.menu .dn { margin-left: 4px; }
.burger { width: 7px; height: 7px; margin-right: 3px; border: solid #777; border-width: 1px 0; background: linear-gradient(#777, #777) 0 2px / 100% 1px no-repeat; }
.pick { position: relative; display: block; }
.pick::after { content: ""; position: absolute; right: 4px; top: 5px; border: 2px solid transparent; border-top: 3px solid #333; border-bottom: 0; }
.pick select { display: block; width: 100%; height: 13px; padding-left: 1px; border: 1px solid #9a9a9a; background: #fff; appearance: none; line-height: 11px; }
.selbar .pick { width: 111px; }
.faint { color: #bbb; }
.selbar .last { margin-left: auto; }

/* work area */
.work { display: flex; flex: 1; min-height: 0; background: #fcfcfc; }
.rail { display: flex; flex-direction: column; width: 22px; background: #dfdfe1; border-right: 1px solid #cfcfcf; color: #777; }
.rail button { display: flex; align-items: center; justify-content: center; height: 26px; }
.rail .first { height: 20px; }
.rail .on { background: #fff; }

.panel { position: relative; display: flex; flex-direction: column; width: 280px; flex: none; padding: 2px 7px 3px 4px; border-right: 1px solid #9d9d9d; }
.ptitle { display: flex; align-items: center; height: 16px; margin: 0; font-size: 9px; font-weight: normal; }
.box { width: 8px; height: 7px; margin-left: auto; border: 1px solid #444; border-top-width: 2px; }
.treebox { display: flex; flex-direction: column; flex: 1; min-height: 0; margin-bottom: 1px; border-bottom: 5px solid #c9c9c9; }
.treeview { position: relative; flex: 1; min-height: 0; overflow: hidden; background: #fff; }
.tree { width: 100%; table-layout: fixed; border-collapse: collapse; }
.tree th { height: 15px; padding: 0 0 0 3px; background: #ececee; border-right: 1px solid #d6d6d6; font-weight: normal; text-align: left; }
.c1 { width: 161px; }
.c2 { width: 27px; }
.upt { display: inline-block; margin: 0 0 2px 8px; border: 3px solid transparent; border-bottom: 4px solid #333; border-top: 0; }
.tree td { height: 13px; padding: 0 0 0 2px; line-height: 13px; border-right: 1px solid #eee; white-space: nowrap; }
.tree tr:nth-child(odd) td { height: 14px; }
.tree tr:nth-child(even) { background: #f9f9fa; }
.tree td:first-child { padding: 0; background: linear-gradient(#ddd, #ddd) 6px 0 / 1px 100% no-repeat; }
.cat, .leaf { display: flex; align-items: center; height: 13px; }
.cat { padding-left: 3px; }
.leaf { padding-left: 13px; background: linear-gradient(#ddd, #ddd) 16px 0 / 1px 100% no-repeat; }
.cat b, .leaf b { width: 7px; font-weight: normal; text-align: center; color: #777; }
.cat svg, .leaf svg { margin-right: 1px; }
.leaf input { appearance: none; width: 8px; height: 8px; margin-left: 2px; border: 1px solid #78a582; background: #fff; }
.leaf input::before { content: ""; display: block; width: 5px; height: 2px; margin: 1px 0 0 1px; border: solid #3f9a50; border-width: 0 0 1px 1px; transform: rotate(-50deg); }
.vbar { position: absolute; right: 0; top: 15px; bottom: 0; width: 10px; display: flex; flex-direction: column; align-items: center; padding: 4px 0; background: #f3f3f3; }
.vbar .thumb { width: 9px; height: 89%; margin: 1px 0 auto; background: #c8c8c8; }
.hbar { display: flex; align-items: center; height: 11px; padding: 0 14px 0 5px; background: #f0f0f0; }
.hbar .thumb { width: 56px; height: 9px; margin: 0 auto 0 3px; background: #c8c8c8; }
.ch { flex: none; width: 4px; height: 4px; border: solid #444; border-width: 1px 1px 0 0; transform: rotate(-45deg); }
.d { transform: rotate(135deg); }
.l { transform: rotate(-135deg); }
.r { transform: rotate(45deg); }
.fold { display: flex; align-items: center; height: 17px; margin-bottom: -1px; padding-left: 7px; border-bottom: 1px solid #c6c6c6; color: #3a7088; font-size: 11px; }
.fold::before { content: ""; margin-right: 5px; border: 3px solid transparent; border-left: 4px solid #244c5e; border-right: 0; }
.cursor { position: absolute; left: 186px; top: 96px; width: 8px; height: 12px; }

/* document area */
.view { display: flex; flex-direction: column; flex: 1; min-width: 0; }
.docs { display: flex; height: 19px; border-bottom: 2px solid #7297a8; }
.doc { display: flex; align-items: center; gap: 2px; padding: 0 3px; white-space: nowrap; }
.d1 { margin-right: 9px; }
.d2 { margin-right: 9px; }
.docs .on { background: #1f5c82; color: #e6f0f5; }
.canvas { position: relative; flex: 1; min-height: 0; background: linear-gradient(#b2b2b5, #cfd0d3 50%, #e9eaee 85%); }
.scene { width: 100%; height: 100%; stroke: none; }
.axis { font-size: 8px; }
.dialog { position: absolute; left: 104px; top: -1px; width: 116px; background: #f4f4f6; border: 1px solid #cdd2d6; border-top: 0; }
.dialog header { display: flex; align-items: center; gap: 4px; height: 16px; padding: 0 3px 0 4px; background: #1f5c82; color: #dfeaf0; }
.dialog header span { flex: 1; }
.dialog header svg { width: 8px; height: 8px; stroke-width: 2; margin: 0 1px; }
.dbody { display: flex; flex-direction: column; padding: 4px 5px 7px 4px; }
.drow { display: flex; align-items: center; gap: 3px; }
.drow .pick { flex: 1; }
.drow select { height: 14px; }
output { text-align: right; margin-top: 2px; }
.dialog input { appearance: none; width: auto; height: 14px; margin: 0 3px 1px; background: linear-gradient(#8b8b8b, #8b8b8b) 0 6px / 100% 2px no-repeat; }
.dialog input::-webkit-slider-thumb { appearance: none; width: 5px; height: 11px; background: #1f5470; }
.ends { display: flex; justify-content: space-between; padding-left: 3px; }
.dialog button { align-self: flex-end; width: 36px; height: 17px; margin: 7px 3px 0 0; border: 1px solid #6f93a4; background: #f8f8fa; color: #3a6f86; }
.viewbar { display: flex; flex-direction: column; align-items: center; width: 20px; padding: 6px 0 4px; color: #777; }
.viewbar button { display: flex; align-items: center; height: 18px; }
.viewbar .dn { margin-top: auto; }

.status { display: grid; grid-template-columns: 525fr 555fr; height: 14px; border-top: 1px solid #cfcfcf; background: #fcfcfc; font-size: 8px; line-height: 12px; }
.status strong { grid-column: 2; }

/* taskbar */
.taskbar { display: flex; height: 26px; background: #201f24; color: #e6e6e6; }
.start { display: flex; align-items: center; justify-content: center; width: 33px; }
.tsearch { display: flex; align-items: center; gap: 7px; flex: 0 1 194px; padding-left: 8px; background: #f2f2f2; color: #444; font-size: 11px; }
.tsearch input { flex: 1; min-width: 0; }
.tsearch ::placeholder { color: #444; }
.task { display: flex; align-items: center; justify-content: center; width: 33px; background: linear-gradient(#5e7f96, #5e7f96) center bottom / 27px 1px no-repeat; }
.plain { background: none; }
.taskbar .on { background: #55545a; }
.nx { width: 16px; height: 16px; border-left: 2px solid #35a796; border-bottom: 2px solid #35a796; background: #9c1f24; color: #fff; font-size: 7px; font-weight: bold; line-height: 14px; text-align: center; }
.tray { display: flex; align-items: center; gap: 5px; margin-left: auto; padding-right: 14px; }
.solid { fill: #f0f0f0; stroke: none; }
.dimmed { color: #999; }
.pen { margin: 0 2px 0 6px; }
.ime { font-size: 11px; }
time { font-size: 8px; line-height: 12px; text-align: center; }
.note { position: relative; margin-left: 9px; }
.note em { position: absolute; left: 6px; top: 4px; width: 9px; height: 9px; border-radius: 50%; background: #444; color: #fff; font: bold 7px/9px "Noto Sans", sans-serif; text-align: center; }

.mark { height: 23px; padding-right: 5px; color: #e4e4e4; font: 14px/20px "Liberation Mono", "Noto Sans CJK SC", monospace; text-align: right; }
.mark span { font-size: 15px; }
```
